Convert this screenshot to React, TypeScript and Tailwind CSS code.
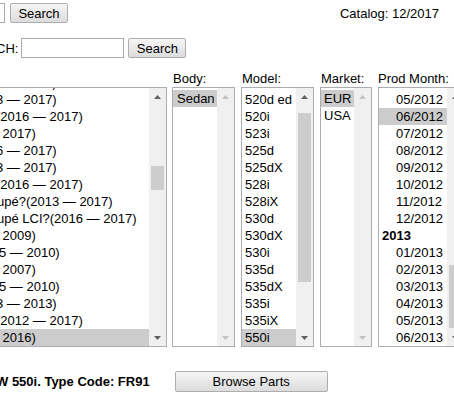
import React from "react";

type Row = { t: string; c: string; w?: string; sel?: boolean };

const leftRows: Row[] = [
  { t: "8 — 2017)", c: "ml-[-4px]", w: "mt-[-17px]" },
  { t: "3 — 2017)", c: "ml-[-4px]" },
  { t: "(2016 — 2017)", c: "ml-[-4px]" },
  { t: "— 2017)", c: "ml-[-14px]" },
  { t: "6 — 2017)", c: "ml-[-4px]" },
  { t: "3 — 2017)", c: "ml-[-4px]" },
  { t: "(2016 — 2017)", c: "ml-[-4px]" },
  { t: "upé?(2013 — 2017)", c: "ml-[-3px]" },
  { t: "upé LCI?(2016 — 2017)", c: "ml-[-3px]" },
  { t: "— 2009)", c: "ml-[-14px]" },
  { t: "5 — 2010)", c: "ml-[-1px]" },
  { t: "— 2007)", c: "ml-[-14px]" },
  { t: "5 — 2010)", c: "ml-[-1px]" },
  { t: "3 — 2013)", c: "ml-[-4px]" },
  { t: "(2012 — 2017)", c: "ml-[-4px]" },
  { t: "— 2016)", c: "ml-[-14px]", sel: true },
];

const models = [
  "520d ed",
  "520i",
  "523i",
  "525d",
  "525dX",
  "528i",
  "528iX",
  "530d",
  "530dX",
  "530i",
  "535d",
  "535dX",
  "535i",
  "535iX",
  "550i",
];

const months: Row[] = [
  { t: "05/2012", c: "pl-[17px]" },
  { t: "06/2012", c: "pl-[17px]", sel: true },
  { t: "07/2012", c: "pl-[17px]" },
  { t: "08/2012", c: "pl-[17px]" },
  { t: "09/2012", c: "pl-[17px]" },
  { t: "10/2012", c: "pl-[17px]" },
  { t: "11/2012", c: "pl-[17px]" },
  { t: "12/2012", c: "pl-[17px]" },
  { t: "2013", c: "pl-[3px] font-bold" },
  { t: "01/2013", c: "pl-[17px]" },
  { t: "02/2013", c: "pl-[17px]" },
  { t: "03/2013", c: "pl-[17px]" },
  { t: "04/2013", c: "pl-[17px]" },
  { t: "05/2013", c: "pl-[17px]" },
  { t: "06/2013", c: "pl-[17px]" },
];

function Arrow({ up, disabled }: { up?: boolean; disabled?: boolean }) {
  return (
    <div className="h-[17px] flex items-center justify-center shrink-0">
      <svg width="7" height="4" viewBox="0 0 7 4">
        <polygon
          points={up ? "0,4 3.5,0 7,4" : "0,0 7,0 3.5,4"}
          fill={disabled ? "#c2c2c2" : "#606060"}
        />
      </svg>
    </div>
  );
}

function Scrollbar({
  disabled,
  gap,
  thumb,
}: {
  disabled?: boolean;
  gap?: string;
  thumb?: string;
}) {
  return (
    <div className="w-[17px] shrink-0 bg-[#f0f0f0] flex flex-col">
      <Arrow up disabled={disabled} />
      <div className="flex-1 flex flex-col">
        {!disabled && <div className={gap} />}
        {!disabled && <div className={`${thumb} mx-[2px] bg-[#cdcdcd]`} />}
      </div>
      <Arrow disabled={disabled} />
    </div>
  );
}

function Btn({ children, cls }: { children: React.ReactNode; cls: string }) {
  return (
    <button
      className={`${cls} border border-[#adadad] rounded-[2px] bg-linear-to-b from-[#f6f6f6] to-[#dcdcdc] text-[13px] leading-none text-black flex items-center justify-center`}
    >
      {children}
    </button>
  );
}

export default function App() {
  return (
    <div className="w-[454px] h-[401px] overflow-hidden bg-white text-black text-[13px] leading-[17px] font-['Liberation_Sans',Arial,sans-serif]">
      {/* Row 1 */}
      <div className="flex items-center h-[20px] mt-[3px]">
        <input className="w-[60px] h-[20px] ml-[-55px] border border-[#a9a9a9] bg-white outline-none shrink-0" />
        <Btn cls="ml-[5px] w-[58px] h-[20px] shrink-0">Search</Btn>
        <span className="ml-auto mr-[15px]">Catalog: 12/2017</span>
      </div>

      {/* Row 2 */}
      <div className="flex items-center h-[20px] mt-[15px]">
        <span className="ml-[-4px] whitespace-nowrap">CH:</span>
        <input className="ml-[3px] w-[103px] h-[20px] border border-[#a9a9a9] bg-white outline-none shrink-0" />
        <Btn cls="ml-[4px] w-[58px] h-[20px] shrink-0">Search</Btn>
      </div>

      {/* Selects */}
      <div className="flex items-start mt-[12px]">
        {/* Left list */}
        <div className="ml-[-1px] w-[168px] shrink-0 flex flex-col">
          <div className="h-[17px]" />
          <div className="h-[260px] border border-[#abadb3] flex overflow-hidden">
            <div className="flex-1 overflow-hidden pt-[3px]">
              {leftRows.map((r, i) => (
                <div
                  key={i}
                  className={`h-[17px] whitespace-nowrap ${r.w ?? ""} ${r.sel ? "bg-[#cccccc]" : ""}`}
                >
                  <div className={r.c}>{r.t}</div>
                </div>
              ))}
            </div>
            <Scrollbar gap="h-[61px]" thumb="h-[24px]" />
          </div>
        </div>

        {/* Body */}
        <div className="ml-[5px] w-[63px] shrink-0 flex flex-col">
          <div className="h-[17px] pl-[1px]">Body:</div>
          <div className="h-[260px] border border-[#abadb3] flex overflow-hidden">
            <div className="flex-1 overflow-hidden pt-[2px]">
              <div className="h-[17px] pl-[4px] bg-[#cccccc]">Sedan</div>
            </div>
            <Scrollbar disabled />
          </div>
        </div>

        {/* Model */}
        <div className="ml-[6px] w-[73px] shrink-0 flex flex-col">
          <div className="h-[17px] pl-[1px]">Model:</div>
          <div className="h-[260px] border border-[#abadb3] flex overflow-hidden">
            <div className="flex-1 overflow-hidden pt-[3px]">
              {models.map((m, i) => (
                <div
                  key={m}
                  className={`h-[17px] pl-[3px] whitespace-nowrap ${i === models.length - 1 ? "bg-[#cccccc]" : ""}`}
                >
                  {m}
                </div>
              ))}
            </div>
            <Scrollbar gap="h-[8px]" thumb="h-[169px]" />
          </div>
        </div>

        {/* Market */}
        <div className="ml-[6px] w-[52px] shrink-0 flex flex-col">
          <div className="h-[17px] pl-[1px]">Market:</div>
          <div className="h-[260px] border border-[#abadb3] flex overflow-hidden">
            <div className="flex-1 overflow-hidden pt-[2px]">
              <div className="h-[17px] pl-[3px] bg-[#cccccc]">EUR</div>
              <div className="h-[17px] pl-[3px]">USA</div>
            </div>
            <Scrollbar disabled />
          </div>
        </div>

        {/* Prod Month */}
        <div className="ml-[6px] w-[87px] shrink-0 flex flex-col">
          <div className="h-[17px] whitespace-nowrap">Prod Month:</div>
          <div className="h-[260px] border border-[#abadb3] flex overflow-hidden">
            <div className="flex-1 overflow-hidden pt-[3px]">
              {months.map((m, i) => (
                <div
                  key={i}
                  className={`h-[17px] whitespace-nowrap ${m.c} ${m.sel ? "bg-[#cccccc]" : ""}`}
                >
                  {m.t}
                </div>
              ))}
            </div>
            <Scrollbar gap="h-[160px]" thumb="h-[63px]" />
          </div>
        </div>
      </div>

      {/* Bottom */}
      <div className="flex items-center h-[21px] mt-[24px]">
        <span className="ml-[-4px] font-bold whitespace-nowrap">W 550i. Type Code: FR91</span>
        <Btn cls="ml-[25px] w-[153px] h-[21px] shrink-0">Browse Parts</Btn>
      </div>
    </div>
  );
}
